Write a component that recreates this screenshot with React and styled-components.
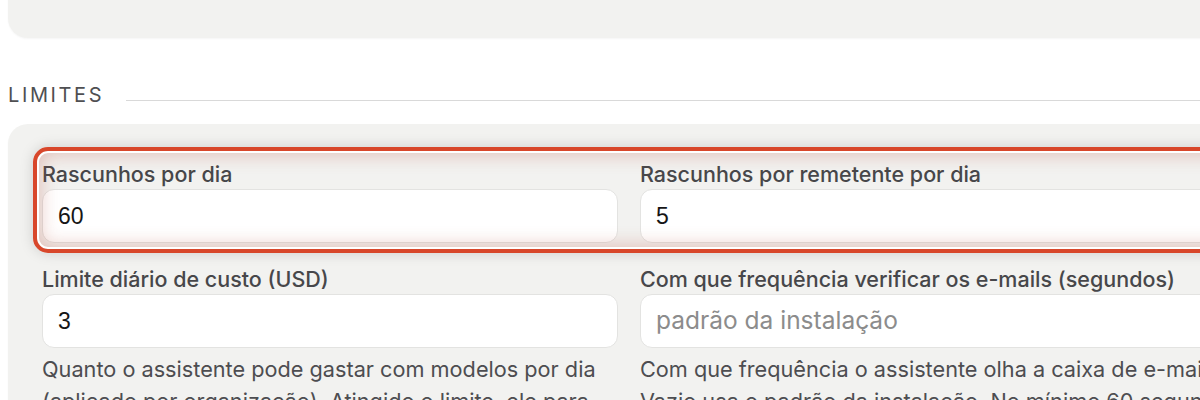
import React from 'react'
import styled, { createGlobalStyle } from 'styled-components'

const GlobalStyle = createGlobalStyle`
    html, body {
        margin:0;
        padding:0;
        background:#ffffff;
        overflow:hidden;
    }
    body {
        font-family:Inter, "Noto Sans", sans-serif;
        color:#3f3f3f;
    }
`;

const Page = styled.div`
    width:1300px;
    padding:0 8px;
    display:flex;
    flex-direction:column;
`;

const Card = styled.section`
    background-color:#f2f2f0;
    border-radius:20px;
    box-shadow:0 1px 2px rgba(0,0,0,0.04);
`;

const TopCard = styled(Card)`
    margin-top:-48px;
    padding:20px 34px 36px;
    font-size:20px;
    line-height:30px;
    color:#4d4d4d;
    white-space:nowrap;
    overflow:hidden;
`;

const SectionHeader = styled.div`
    display:flex;
    align-items:center;
    gap:22px;
    margin:44px 0 16px;
`;

const SectionTitle = styled.h2`
    margin:0;
    font-size:20px;
    font-weight:400;
    letter-spacing:2.6px;
    color:#4f4f52;
    line-height:26px;
`;

const Rule = styled.div`
    flex:1;
    height:1px;
    margin-top:11px;
    background-color:#d9d9d9;
`;

const FieldsCard = styled(Card)`
    padding:36px 34px 30px;
    display:flex;
    flex-direction:column;
    gap:22px;
`;

const Row = styled.div`
    position:relative;
    display:grid;
    grid-template-columns:576px 1fr;
    column-gap:22px;
    ${({ $highlight }) => $highlight && `
        &::after{
            content:"";
            position:absolute;
            top:-13px;
            bottom:-10px;
            left:-9px;
            right:-9px;
            border:4px solid #d8472b;
            border-radius:15px;
            box-shadow:inset 0 0 0 2px #ffffff, inset 0 0 18px 4px rgba(190,90,70,0.32), 0 0 14px rgba(0,0,0,0.15);
            pointer-events:none;
        }
    `}
`;

const Field = styled.label`
    display:flex;
    flex-direction:column;
    gap:1px;
`;

const Label = styled.span`
    font-size:21.5px;
    font-weight:500;
    line-height:28px;
    color:#47474a;
`;

const Input = styled.input`
    box-sizing:border-box;
    width:100%;
    height:54px;
    padding:0 15px;
    border:1px solid #e3e3e1;
    border-radius:12px;
    background-color:#ffffff;
    font-family:"Liberation Sans", Arial, sans-serif;
    font-size:23px;
    color:#161616;
    outline:none;
    &::placeholder{
        font-family:Inter, "Noto Sans", sans-serif;
        font-size:24.5px;
        color:#8c8c8c;
    }
`;

const Hint = styled.p`
    margin:4px 0 0;
    font-size:21.7px;
    line-height:32px;
    color:#4d4d50;
`;

export default function App() {
    return (
        <Page>
            <GlobalStyle />
            <TopCard>
                Os aprendizados do assistente ficam guardados por organização e valem para todas as caixas de e-mail conectadas.
            </TopCard>
            <SectionHeader>
                <SectionTitle>LIMITES</SectionTitle>
                <Rule />
            </SectionHeader>
            <FieldsCard>
                <Row $highlight>
                    <Field>
                        <Label>Rascunhos por dia</Label>
                        <Input defaultValue="60" />
                    </Field>
                    <Field>
                        <Label>Rascunhos por remetente por dia</Label>
                        <Input defaultValue="5" />
                    </Field>
                </Row>
                <Row>
                    <Field>
                        <Label>Limite diário de custo (USD)</Label>
                        <Input defaultValue="3" />
                        <Hint>Quanto o assistente pode gastar com modelos por dia (aplicado por organização). Atingido o limite, ele para até o dia seguinte.</Hint>
                    </Field>
                    <Field>
                        <Label>Com que frequência verificar os e-mails (segundos)</Label>
                        <Input placeholder="padrão da instalação" />
                        <Hint>Com que frequência o assistente olha a caixa de e-mails. Vazio usa o padrão da instalação. No mínimo 60 segundos.</Hint>
                    </Field>
                </Row>
            </FieldsCard>
        </Page>
    )
}
